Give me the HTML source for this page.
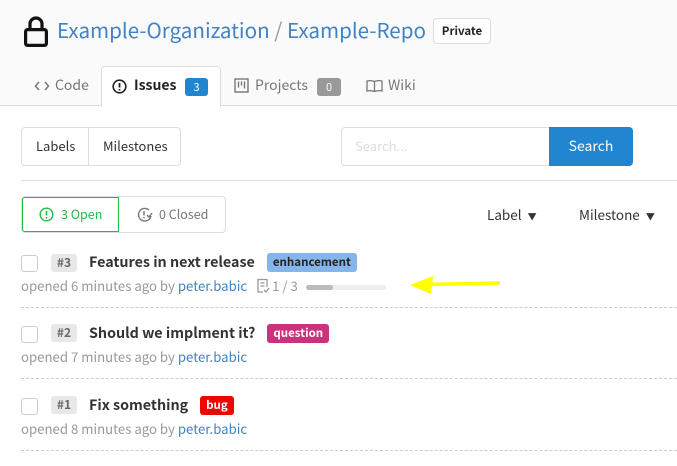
<!DOCTYPE html>
<html><head><style>
*{margin:0;padding:0;box-sizing:border-box}
body{width:677px;height:466px;background:#fff;font-family:"Noto Sans CJK SC","Liberation Sans",sans-serif;line-height:1.2;position:relative;overflow:hidden;color:#333}
.a{position:absolute;white-space:nowrap}
.hdr{position:absolute;left:0;top:0;width:677px;height:106px;background:#fafafa;border-bottom:1px solid #ddd}
.box{position:absolute;border:1px solid #ddd;border-radius:4px;background:#fff}
.cb{position:absolute;width:17px;height:17px;border:1px solid #ccc;border-radius:3px;left:21px}
.num{position:absolute;left:51px;width:26px;height:18px;background:#e8e8e8;border-radius:3px;font-size:12px;font-weight:bold;color:#666;text-align:center;line-height:18px}
.row{position:absolute;left:89px;display:flex;align-items:center;height:20px;white-space:nowrap}
.ttl{font-size:14.3px;font-weight:bold;color:#333}
.lbl{margin-left:12px;height:19px;border-radius:3px;font-size:11.5px;font-weight:bold;line-height:19px;padding:0 6px}
.meta{position:absolute;left:21px;font-size:13.2px;color:#999;display:flex;align-items:center;white-space:nowrap}
.meta b{font-weight:normal;color:#4183c4}
.dash{position:absolute;left:21px;right:0;border-top:1px dashed #ccc}
</style></head><body>
<div class="hdr"></div>
<svg class="a" style="left:24px;top:16px" width="24" height="31" viewBox="0 0 24 31"><path d="M6 13V8a6 6 0 0 1 12 0v5" fill="none" stroke="#111" stroke-width="3.2"/><rect x="1.6" y="13.6" width="20.8" height="15.8" rx="2" fill="none" stroke="#111" stroke-width="3.2"/></svg>
<div class="a" style="left:57px;top:17px;font-size:20.6px;color:#4183c4">Example-Organization <span style="color:#999">/</span> Example-Repo</div>
<div class="box" style="left:433px;top:18px;width:58px;height:26px;font-size:11.5px;font-weight:bold;text-align:center;line-height:24px;color:#222">Private</div>
<svg class="a" style="left:34px;top:80px" width="16" height="12"><path d="M5 2L1.5 6 5 10M11 2l3.5 4L11 10" fill="none" stroke="#777" stroke-width="1.5"/></svg>
<div class="a" style="left:55px;top:77px;font-size:14px;color:#777">Code</div>
<div class="a" style="left:101px;top:66px;width:120px;height:41px;background:#fff;border:1px solid #ddd;border-bottom:none;border-radius:4px 4px 0 0"></div>
<svg class="a" style="left:112px;top:79px" width="15" height="15"><circle cx="7.5" cy="7.5" r="6.3" fill="none" stroke="#222" stroke-width="1.6"/><path d="M7.5 4v4.5M7.5 10v1.5" stroke="#222" stroke-width="1.8"/></svg>
<div class="a" style="left:134px;top:77px;font-size:14px;font-weight:bold;color:#222">Issues</div>
<div class="a" style="left:185px;top:78px;width:23px;height:18px;background:#2185d0;border-radius:3px;color:#fff;font-size:11px;text-align:center;line-height:18px">3</div>
<svg class="a" style="left:234px;top:78px" width="15" height="15"><rect x="1" y="1" width="13" height="13" fill="none" stroke="#777" stroke-width="1.4"/><path d="M4.5 3.5v6M7.5 3.5v4M10.5 3.5v7" stroke="#777" stroke-width="1.4"/></svg>
<div class="a" style="left:255px;top:77px;font-size:14px;color:#777">Projects</div>
<div class="a" style="left:317px;top:78px;width:24px;height:18px;background:#999;border-radius:3px;color:#fff;font-size:11px;text-align:center;line-height:18px">0</div>
<svg class="a" style="left:366px;top:79px" width="17" height="14"><path d="M8.5 2.5Q5 1 1 2v10q4-1 7.5 .5Q12 11 16 12V2q-4-1-7.5 .5zM8.5 2.5v10" fill="none" stroke="#777" stroke-width="1.3"/></svg>
<div class="a" style="left:388px;top:77px;font-size:14px;color:#777">Wiki</div>

<div class="box" style="left:21px;top:127px;width:160px;height:39px"></div>
<div class="a" style="left:88px;top:128px;width:1px;height:37px;background:#ddd"></div>
<div class="a" style="left:36px;top:138px;font-size:13px">Labels</div>
<div class="a" style="left:103px;top:138px;font-size:13px">Milestones</div>
<div class="box" style="left:341px;top:127px;width:292px;height:39px"></div>
<div class="a" style="left:355px;top:138px;font-size:13px;color:#ddd">Search...</div>
<div class="a" style="left:549px;top:127px;width:84px;height:39px;background:#2185d0;border-radius:0 4px 4px 0;color:#fff;font-size:14px;text-align:center;line-height:39px">Search</div>
<div class="a" style="left:21px;top:180px;width:656px;border-top:1px solid #ddd"></div>

<div class="box" style="left:21px;top:196px;width:205px;height:37px"></div>
<div class="a" style="left:22px;top:197px;width:97px;height:35px;border:1px solid #21ba45;border-radius:3px 0 0 3px"></div>
<svg class="a" style="left:39px;top:207px" width="15" height="15"><circle cx="7.5" cy="7.5" r="6.3" fill="none" stroke="#21ba45" stroke-width="1.4"/><path d="M7.5 4v4.5M7.5 10v1.5" stroke="#21ba45" stroke-width="1.6"/></svg>
<div class="a" style="left:61px;top:206px;font-size:12.5px;color:#21ba45">3 Open</div>
<svg class="a" style="left:137px;top:207px" width="16" height="16"><path d="M12 3A6.3 6.3 0 1 0 14 9" fill="none" stroke="#777" stroke-width="1.4"/><path d="M7 4v4.5M7 10v1.5M10 8l2 2 3-4" fill="none" stroke="#777" stroke-width="1.4"/></svg>
<div class="a" style="left:159px;top:206px;font-size:12.5px;color:#777">0 Closed</div>
<div class="a" style="left:487px;top:206px;font-size:13.5px">Label&nbsp; <span style="font-size:9px">&#9660;</span></div>
<div class="a" style="left:579px;top:206px;font-size:13.5px">Milestone&nbsp; <span style="font-size:9px">&#9660;</span></div>

<div class="cb" style="top:255px"></div><div class="num" style="top:254px">#3</div>
<div class="row" style="top:252px"><span class="ttl">Features in next release</span><span class="lbl" style="background:#84b6eb;color:#222">enhancement</span></div>
<div class="meta" style="top:278px">opened 6 minutes ago by&nbsp;<b>peter.babic</b>
<svg style="margin-left:9px" width="14" height="16"><path d="M7 14H2V1.5h9V9M4.5 5h4M4.5 8h4" fill="none" stroke="#999" stroke-width="1.3"/><path d="M8 12l2 2 3-4" fill="none" stroke="#999" stroke-width="1.3"/></svg>
<span style="margin-left:2px">1 / 3</span></div>
<div class="a" style="left:306px;top:285px;width:80px;height:5px;background:#eee;border-radius:3px"><div style="width:27px;height:5px;background:#bbb;border-radius:3px"></div></div>
<svg class="a" style="left:405px;top:274px" width="96" height="22"><path d="M20 10.5L95 9" stroke="#ffff00" stroke-width="3.5"/><path d="M5 11L28 2L26 20Z" fill="#ffff00"/></svg>
<div class="dash" style="top:307px"></div>

<div class="cb" style="top:326px"></div><div class="num" style="top:324px">#2</div>
<div class="row" style="top:323px"><span class="ttl">Should we implment it?</span><span class="lbl" style="background:#cc317c;color:#fff">question</span></div>
<div class="meta" style="top:349px">opened 7 minutes ago by&nbsp;<b>peter.babic</b></div>
<div class="dash" style="top:378px"></div>

<div class="cb" style="top:398px"></div><div class="num" style="top:396px">#1</div>
<div class="row" style="top:395px"><span class="ttl">Fix something</span><span class="lbl" style="background:#ee0701;color:#fff">bug</span></div>
<div class="meta" style="top:421px">opened 8 minutes ago by&nbsp;<b>peter.babic</b></div>
<div class="dash" style="top:450px"></div>
</body></html>
